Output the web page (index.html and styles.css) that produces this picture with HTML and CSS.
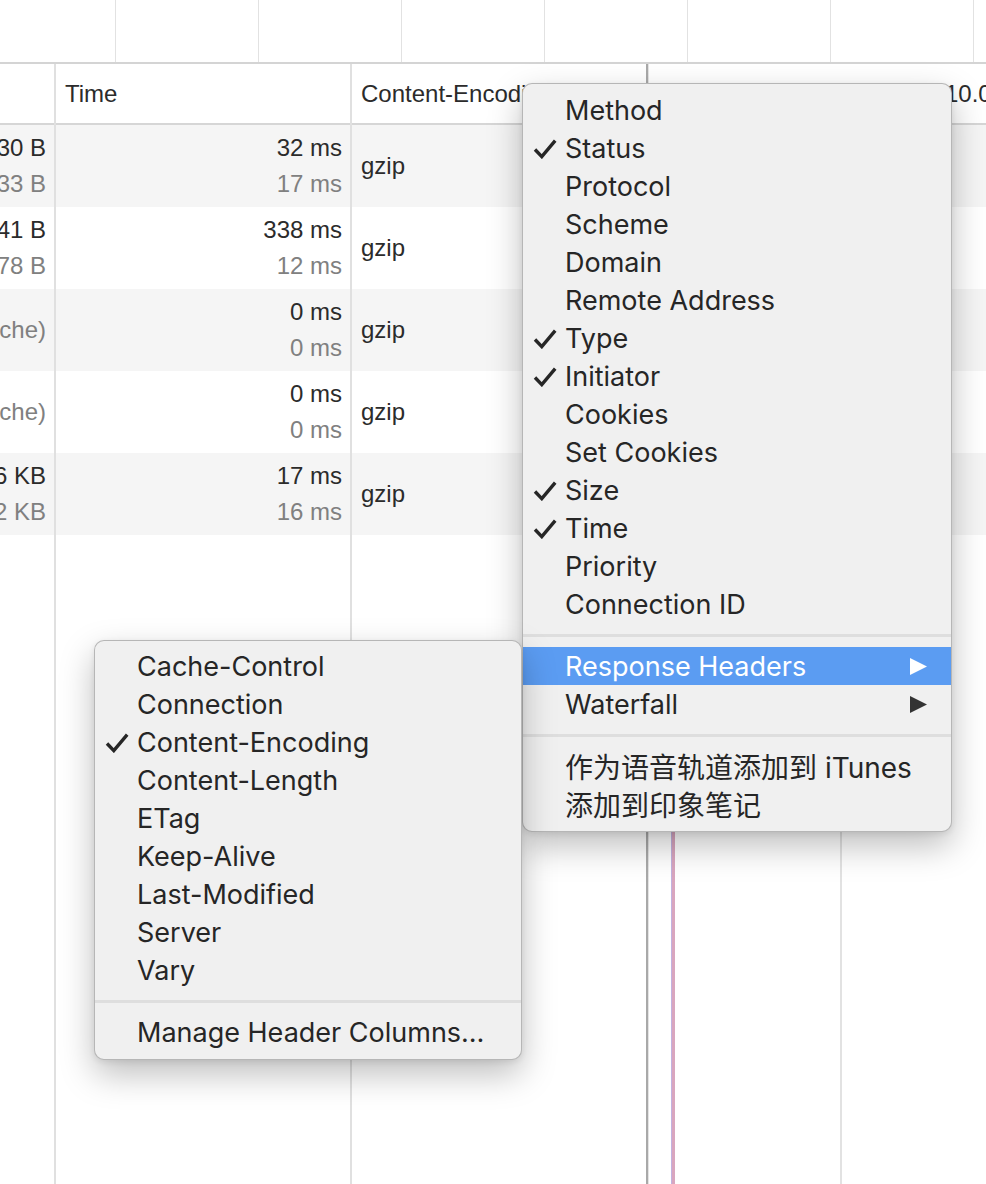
FILE: index.html
```html
<!DOCTYPE html>
<html>
<head>
<meta charset="utf-8">
<link rel="stylesheet" href="styles.css">
</head>
<body>
<div class="overview">
  <div class="ov-lead"></div>
  <div class="ov-cell"></div>
  <div class="ov-cell"></div>
  <div class="ov-cell"></div>
  <div class="ov-cell"></div>
  <div class="ov-cell"></div>
  <div class="ov-cell"></div>
  <div class="ov-cell"></div>
</div>
<div class="table">
  <div class="col col-size">
    <div class="hcell"></div>
    <div class="cell odd"><span class="pri">630 B</span><span class="sec">533 B</span></div>
    <div class="cell"><span class="pri">541 B</span><span class="sec">278 B</span></div>
    <div class="cell odd"><span class="sec">(memory cache)</span></div>
    <div class="cell"><span class="sec">(memory cache)</span></div>
    <div class="cell odd"><span class="pri">3.6 KB</span><span class="sec">1.2 KB</span></div>
    <div class="fill"></div>
  </div>
  <div class="col col-time">
    <div class="hcell">Time</div>
    <div class="cell odd"><span class="pri">32 ms</span><span class="sec">17 ms</span></div>
    <div class="cell"><span class="pri">338 ms</span><span class="sec">12 ms</span></div>
    <div class="cell odd"><span class="pri">0 ms</span><span class="sec">0 ms</span></div>
    <div class="cell"><span class="pri">0 ms</span><span class="sec">0 ms</span></div>
    <div class="cell odd"><span class="pri">17 ms</span><span class="sec">16 ms</span></div>
    <div class="fill"></div>
  </div>
  <div class="col col-enc">
    <div class="hcell">Content-Encoding</div>
    <div class="cell odd"><span class="pri">gzip</span></div>
    <div class="cell"><span class="pri">gzip</span></div>
    <div class="cell odd"><span class="pri">gzip</span></div>
    <div class="cell"><span class="pri">gzip</span></div>
    <div class="cell odd"><span class="pri">gzip</span></div>
    <div class="fill"></div>
  </div>
  <div class="col col-wf">
    <div class="hcell wf-head">10.00ms</div>
    <div class="cell odd"></div>
    <div class="cell"></div>
    <div class="cell odd"></div>
    <div class="cell"></div>
    <div class="cell odd"></div>
    <div class="fill"></div>
    <div class="wf-grid"></div>
    <div class="wf-marker"></div>
  </div>
</div>

<div class="menu main-menu">
  <div class="item">Method</div>
  <div class="item checked"><svg class="check" viewBox="0 0 24 20"><path d="M2 10.5 L8.8 17.6 L22.2 1.6"/></svg>Status</div>
  <div class="item">Protocol</div>
  <div class="item">Scheme</div>
  <div class="item">Domain</div>
  <div class="item">Remote Address</div>
  <div class="item checked"><svg class="check" viewBox="0 0 24 20"><path d="M2 10.5 L8.8 17.6 L22.2 1.6"/></svg>Type</div>
  <div class="item checked"><svg class="check" viewBox="0 0 24 20"><path d="M2 10.5 L8.8 17.6 L22.2 1.6"/></svg>Initiator</div>
  <div class="item">Cookies</div>
  <div class="item">Set Cookies</div>
  <div class="item checked"><svg class="check" viewBox="0 0 24 20"><path d="M2 10.5 L8.8 17.6 L22.2 1.6"/></svg>Size</div>
  <div class="item checked"><svg class="check" viewBox="0 0 24 20"><path d="M2 10.5 L8.8 17.6 L22.2 1.6"/></svg>Time</div>
  <div class="item">Priority</div>
  <div class="item">Connection ID</div>
  <div class="sep"></div>
  <div class="item sub active">Response Headers<svg class="arrow" viewBox="0 0 17 17"><path d="M0 0 L17 8.5 L0 17 Z"/></svg></div>
  <div class="item sub">Waterfall<svg class="arrow" viewBox="0 0 17 17"><path d="M0 0 L17 8.5 L0 17 Z"/></svg></div>
  <div class="sep"></div>
  <div class="item cjk">作为语音轨道添加到 iTunes</div>
  <div class="item cjk">添加到印象笔记</div>
</div>

<div class="menu sub-menu">
  <div class="item">Cache-Control</div>
  <div class="item">Connection</div>
  <div class="item checked"><svg class="check" viewBox="0 0 24 20"><path d="M2 10.5 L8.8 17.6 L22.2 1.6"/></svg>Content-Encoding</div>
  <div class="item">Content-Length</div>
  <div class="item">ETag</div>
  <div class="item">Keep-Alive</div>
  <div class="item">Last-Modified</div>
  <div class="item">Server</div>
  <div class="item">Vary</div>
  <div class="sep"></div>
  <div class="item">Manage Header Columns…</div>
</div>
</body>
</html>
```

FILE: styles.css
```css
html, body {
  margin: 0;
  padding: 0;
}
body {
  width: 986px;
  height: 1184px;
  overflow: hidden;
  position: relative;
  background: #ffffff;
  font-family: "Liberation Sans", Arial, sans-serif;
  font-size: 24px;
  color: #2b2b2b;
}

/* overview strip */
.overview {
  display: flex;
  height: 62px;
  border-bottom: 2px solid #d4d4d4;
  overflow: hidden;
}
.ov-lead {
  flex: 0 0 115px;
}
.ov-cell {
  flex: 0 0 142px;
  border-left: 1px solid #e2e2e2;
}

/* table */
.table {
  display: flex;
  height: 1120px;
}
.col {
  display: flex;
  flex-direction: column;
  position: relative;
}
.col-size {
  width: 54px;
  border-right: 2px solid #e0e0e0;
}
.col-time {
  width: 294px;
  border-right: 2px solid #e0e0e0;
}
.col-enc {
  width: 294px;
  border-right: 2px solid #a9a9a9;
}
.col-wf {
  flex: 1;
  border-left: 1px solid #e4e4e4;
  min-width: 0;
}
.hcell {
  height: 59px;
  border-bottom: 2px solid #d6d6d6;
  display: flex;
  align-items: center;
  padding-left: 9px;
  white-space: nowrap;
  overflow: hidden;
  background: #ffffff;
}
.wf-head {
  padding-left: 296px;
}
.cell {
  height: 82px;
  display: flex;
  flex-direction: column;
  justify-content: center;
  white-space: nowrap;
  overflow: hidden;
  background: #ffffff;
}
.cell.odd {
  background: #f5f5f5;
}
.cell span {
  line-height: 36px;
}
.pri {
  color: #2b2b2b;
}
.sec {
  color: #808080;
}
.col-size .cell,
.col-time .cell {
  align-items: flex-end;
  padding-right: 8px;
}
.col-enc .cell {
  padding-left: 9px;
}
.fill {
  flex: 1;
}
.wf-grid {
  position: absolute;
  left: 191px;
  top: 61px;
  bottom: 0;
  width: 2px;
  background: #e2e2e2;
}
.wf-marker {
  position: absolute;
  left: 22px;
  top: 61px;
  bottom: 0;
  width: 4px;
  background: linear-gradient(to right, #c2b3e0 0, #c2b3e0 1px, #d9a6bf 1px, #d9a6bf 100%);
}

/* menus */
.menu {
  position: absolute;
  background: #f0f0f0;
  border: 1px solid rgba(0, 0, 0, 0.24);
  border-radius: 10px;
  box-shadow: 0 14px 34px rgba(0, 0, 0, 0.26), 0 2px 6px rgba(0, 0, 0, 0.08);
  font-family: "Inter", "Noto Sans CJK SC", sans-serif;
  font-size: 27px;
  color: #262626;
  overflow: hidden;
}
.main-menu {
  left: 522px;
  top: 83px;
  width: 428px;
  padding: 7px 0 8px;
}
.sub-menu {
  left: 94px;
  top: 640px;
  width: 426px;
  padding: 6px 0 8px;
}
.item {
  height: 38px;
  display: flex;
  align-items: center;
  padding-left: 42px;
  position: relative;
  white-space: nowrap;
}
.item.cjk {
  font-size: 28px;
}
.item.active {
  background: #5b9cf2;
  color: #ffffff;
}
.sep {
  height: 24px;
  display: flex;
  align-items: center;
}
.sep::before {
  content: "";
  display: block;
  width: 100%;
  height: 3px;
  background: #dedede;
}
.check {
  position: absolute;
  left: 10px;
  top: 10px;
  width: 24px;
  height: 20px;
}
.check path {
  fill: none;
  stroke: #262626;
  stroke-width: 3.4;
  stroke-linejoin: miter;
}
.arrow {
  position: absolute;
  right: 24px;
  top: 11px;
  width: 17px;
  height: 17px;
}
.arrow path {
  fill: #333333;
}
.item.active .arrow path {
  fill: #ffffff;
}
```
